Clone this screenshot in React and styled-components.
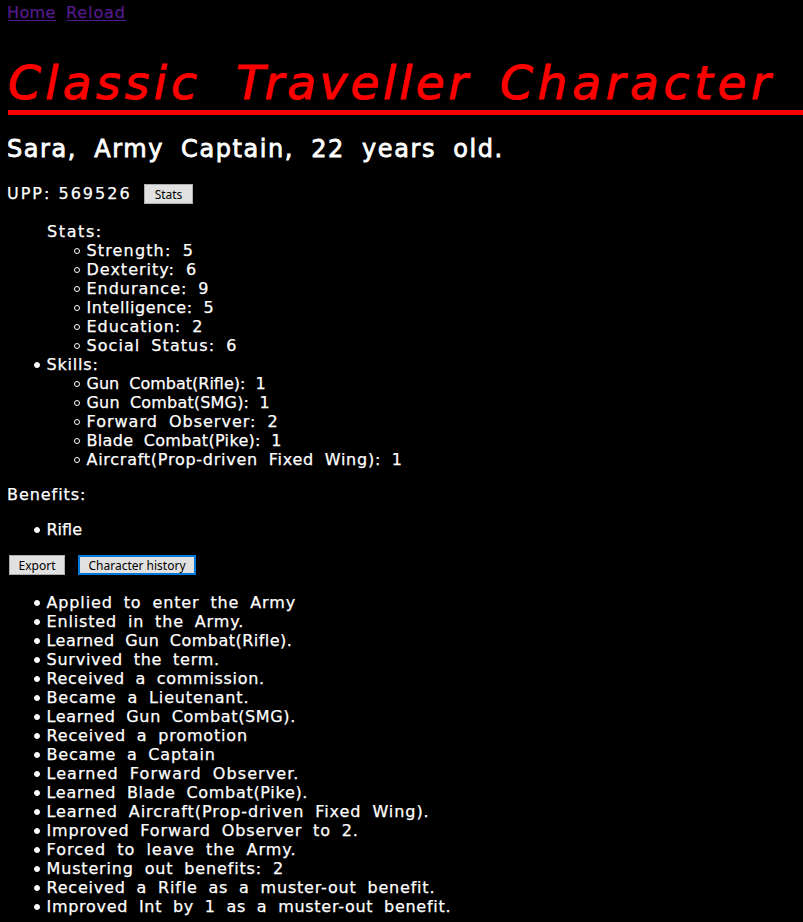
import React from 'react';
import styled, { createGlobalStyle } from 'styled-components';

const GlobalStyle = createGlobalStyle`
  body {
    margin: 0;
    padding: 3px 0 0 8px;
    background: #000;
    color: #fff;
    font: 16px/19px "DejaVu Sans", sans-serif;
    word-spacing: 5px;
    overflow: hidden;
  }
`;

const Nav = styled.nav`
  display: flex;
  gap: 11px;
  height: 19px;
`;

const NavLink = styled.a`
  width: ${(p) => p.$width}px;
  height: 17px;
  border-bottom: 1px solid #551a8b;
  color: #551a8b;
  letter-spacing: ${(p) => p.$track}px;
  text-indent: -1px;
  white-space: nowrap;
  -webkit-text-stroke: 0.25px #551a8b;
`;

const Title = styled.h1`
  display: flex;
  margin: 32px 0 0;
  height: 56px;
  border-bottom: 5px solid #f00;
  color: #f00;
  font-size: 47px;
  font-weight: 400;
  font-style: italic;
  line-height: 57px;
  white-space: pre;
  word-spacing: 0;
  -webkit-text-stroke: 1px #f00;
`;

const TitleWord = styled.span`
  flex: none;
  width: ${(p) => p.$width}px;
  letter-spacing: ${(p) => p.$track}px;
`;

const Subtitle = styled.h2`
  margin: 20px 0;
  height: 29px;
  font-size: 24px;
  font-weight: 400;
  line-height: 29px;
  letter-spacing: 1.57px;
  word-spacing: 8px;
  text-indent: -1px;
  white-space: nowrap;
  -webkit-text-stroke: 0.8px #fff;
`;

const Line = styled.div`
  display: flex;
  height: 19px;
`;

const Text = styled.span`
  width: 136px;
  letter-spacing: ${(p) => p.$track}px;
  word-spacing: 0;
  text-indent: -1px;
  white-space: nowrap;
  -webkit-text-stroke: 0.25px #fff;
`;

const Button = styled.button`
  box-sizing: border-box;
  flex: none;
  width: ${(p) => p.$width}px;
  height: 20px;
  margin: 0;
  padding: 1px 0 0;
  border: ${(p) => (p.$focused ? '2px solid #0078d7' : '1px solid #adadad')};
  background: #e1e1e1;
  color: #000;
  font: 12px/16px "Noto Sans", sans-serif;
  word-spacing: 0;
  white-space: nowrap;
`;

const Actions = styled.div`
  display: flex;
  gap: 13px;
  margin: 16px 0 18px 1px;
`;

const List = styled.ul`
  list-style: none;
  margin: ${(p) => p.$margin || '0'};
  padding: 0 0 0 39px;
`;

const SubList = styled(List)`
  padding-left: 40px;
`;

const Item = styled.li`
  letter-spacing: ${(p) => p.$track}px;
  line-height: 19px;
  white-space: nowrap;
  -webkit-text-stroke: 0.25px #fff;

  &::before {
    content: "";
    display: ${(p) => (p.$marker === 'none' ? 'none' : 'inline-block')};
    box-sizing: border-box;
    width: 6px;
    height: 6px;
    margin: 0 6.5px 0 -13px;
    border: 1px solid #fff;
    border-radius: 50%;
    background: ${(p) => (p.$marker === 'circle' ? 'transparent' : '#fff')};
    vertical-align: 2px;
  }
`;

const Label = styled.p`
  margin: 0;
  letter-spacing: 0.95px;
  text-indent: -1px;
  -webkit-text-stroke: 0.25px #fff;
`;

const stats = [
  ['Strength: 5', 1.15],
  ['Dexterity: 6', 1.0],
  ['Endurance: 9', 0.97],
  ['Intelligence: 5', 0.6],
  ['Education: 2', 0.96],
  ['Social Status: 6', 1.05],
];

const skills = [
  ['Gun Combat(Rifle): 1', 0],
  ['Gun Combat(SMG): 1', 0.18],
  ['Forward Observer: 2', 1.0],
  ['Blade Combat(Pike): 1', 0.32],
  ['Aircraft(Prop-driven Fixed Wing): 1', 0.74],
];

const history = [
  ['Applied to enter the Army', 0.87],
  ['Enlisted in the Army.', 0.84],
  ['Learned Gun Combat(Rifle).', 0.48],
  ['Survived the term.', 0.76],
  ['Received a commission.', 0.69],
  ['Became a Lieutenant.', 0.86],
  ['Learned Gun Combat(SMG).', 0.63],
  ['Received a promotion', 0.82],
  ['Became a Captain', 0.78],
  ['Learned Forward Observer.', 1.07],
  ['Learned Blade Combat(Pike).', 0.7],
  ['Learned Aircraft(Prop-driven Fixed Wing).', 0.94],
  ['Improved Forward Observer to 2.', 0.87],
  ['Forced to leave the Army.', 1.02],
  ['Mustering out benefits: 2', 0.84],
  ['Received a Rifle as a muster-out benefit.', 0.8],
  ['Improved Int by 1 as a muster-out benefit.', 0.71],
];

const renderItems = (rows, marker) =>
  rows.map(([text, track]) => (
    <Item key={text} $track={track} $marker={marker}>{text}</Item>
  ));

export default function App() {
  return (
    <>
      <GlobalStyle />
      <Nav>
        <NavLink $width={48} $track={0.4}>Home</NavLink>
        <NavLink $width={59} $track={0.9}>Reload</NavLink>
      </Nav>
      <Title>
        <TitleWord $width={228} $track={4.4}>Classic </TitleWord>
        <TitleWord $width={264} $track={3.4}>Traveller </TitleWord>
        <TitleWord $width={290} $track={4.8}>Character</TitleWord>
      </Title>
      <Subtitle>Sara, Army Captain, 22 years old.</Subtitle>
      <Line>
        <Text $track={2}>UPP: 569526</Text>
        <Button $width={49}>Stats</Button>
      </Line>
      <List $margin="19px 0 16px">
        <Item $track={1.6} $marker="none">Stats:</Item>
        <SubList>{renderItems(stats, 'circle')}</SubList>
        <Item $track={0.8}>Skills:</Item>
        <SubList>{renderItems(skills, 'circle')}</SubList>
      </List>
      <Label>Benefits:</Label>
      <List $margin="16px 0">
        <Item $track={0}>Rifle</Item>
      </List>
      <Actions>
        <Button $width={56}>Export</Button>
        <Button $width={118} $focused>Character history</Button>
      </Actions>
      <List>{renderItems(history, 'disc')}</List>
    </>
  );
}
